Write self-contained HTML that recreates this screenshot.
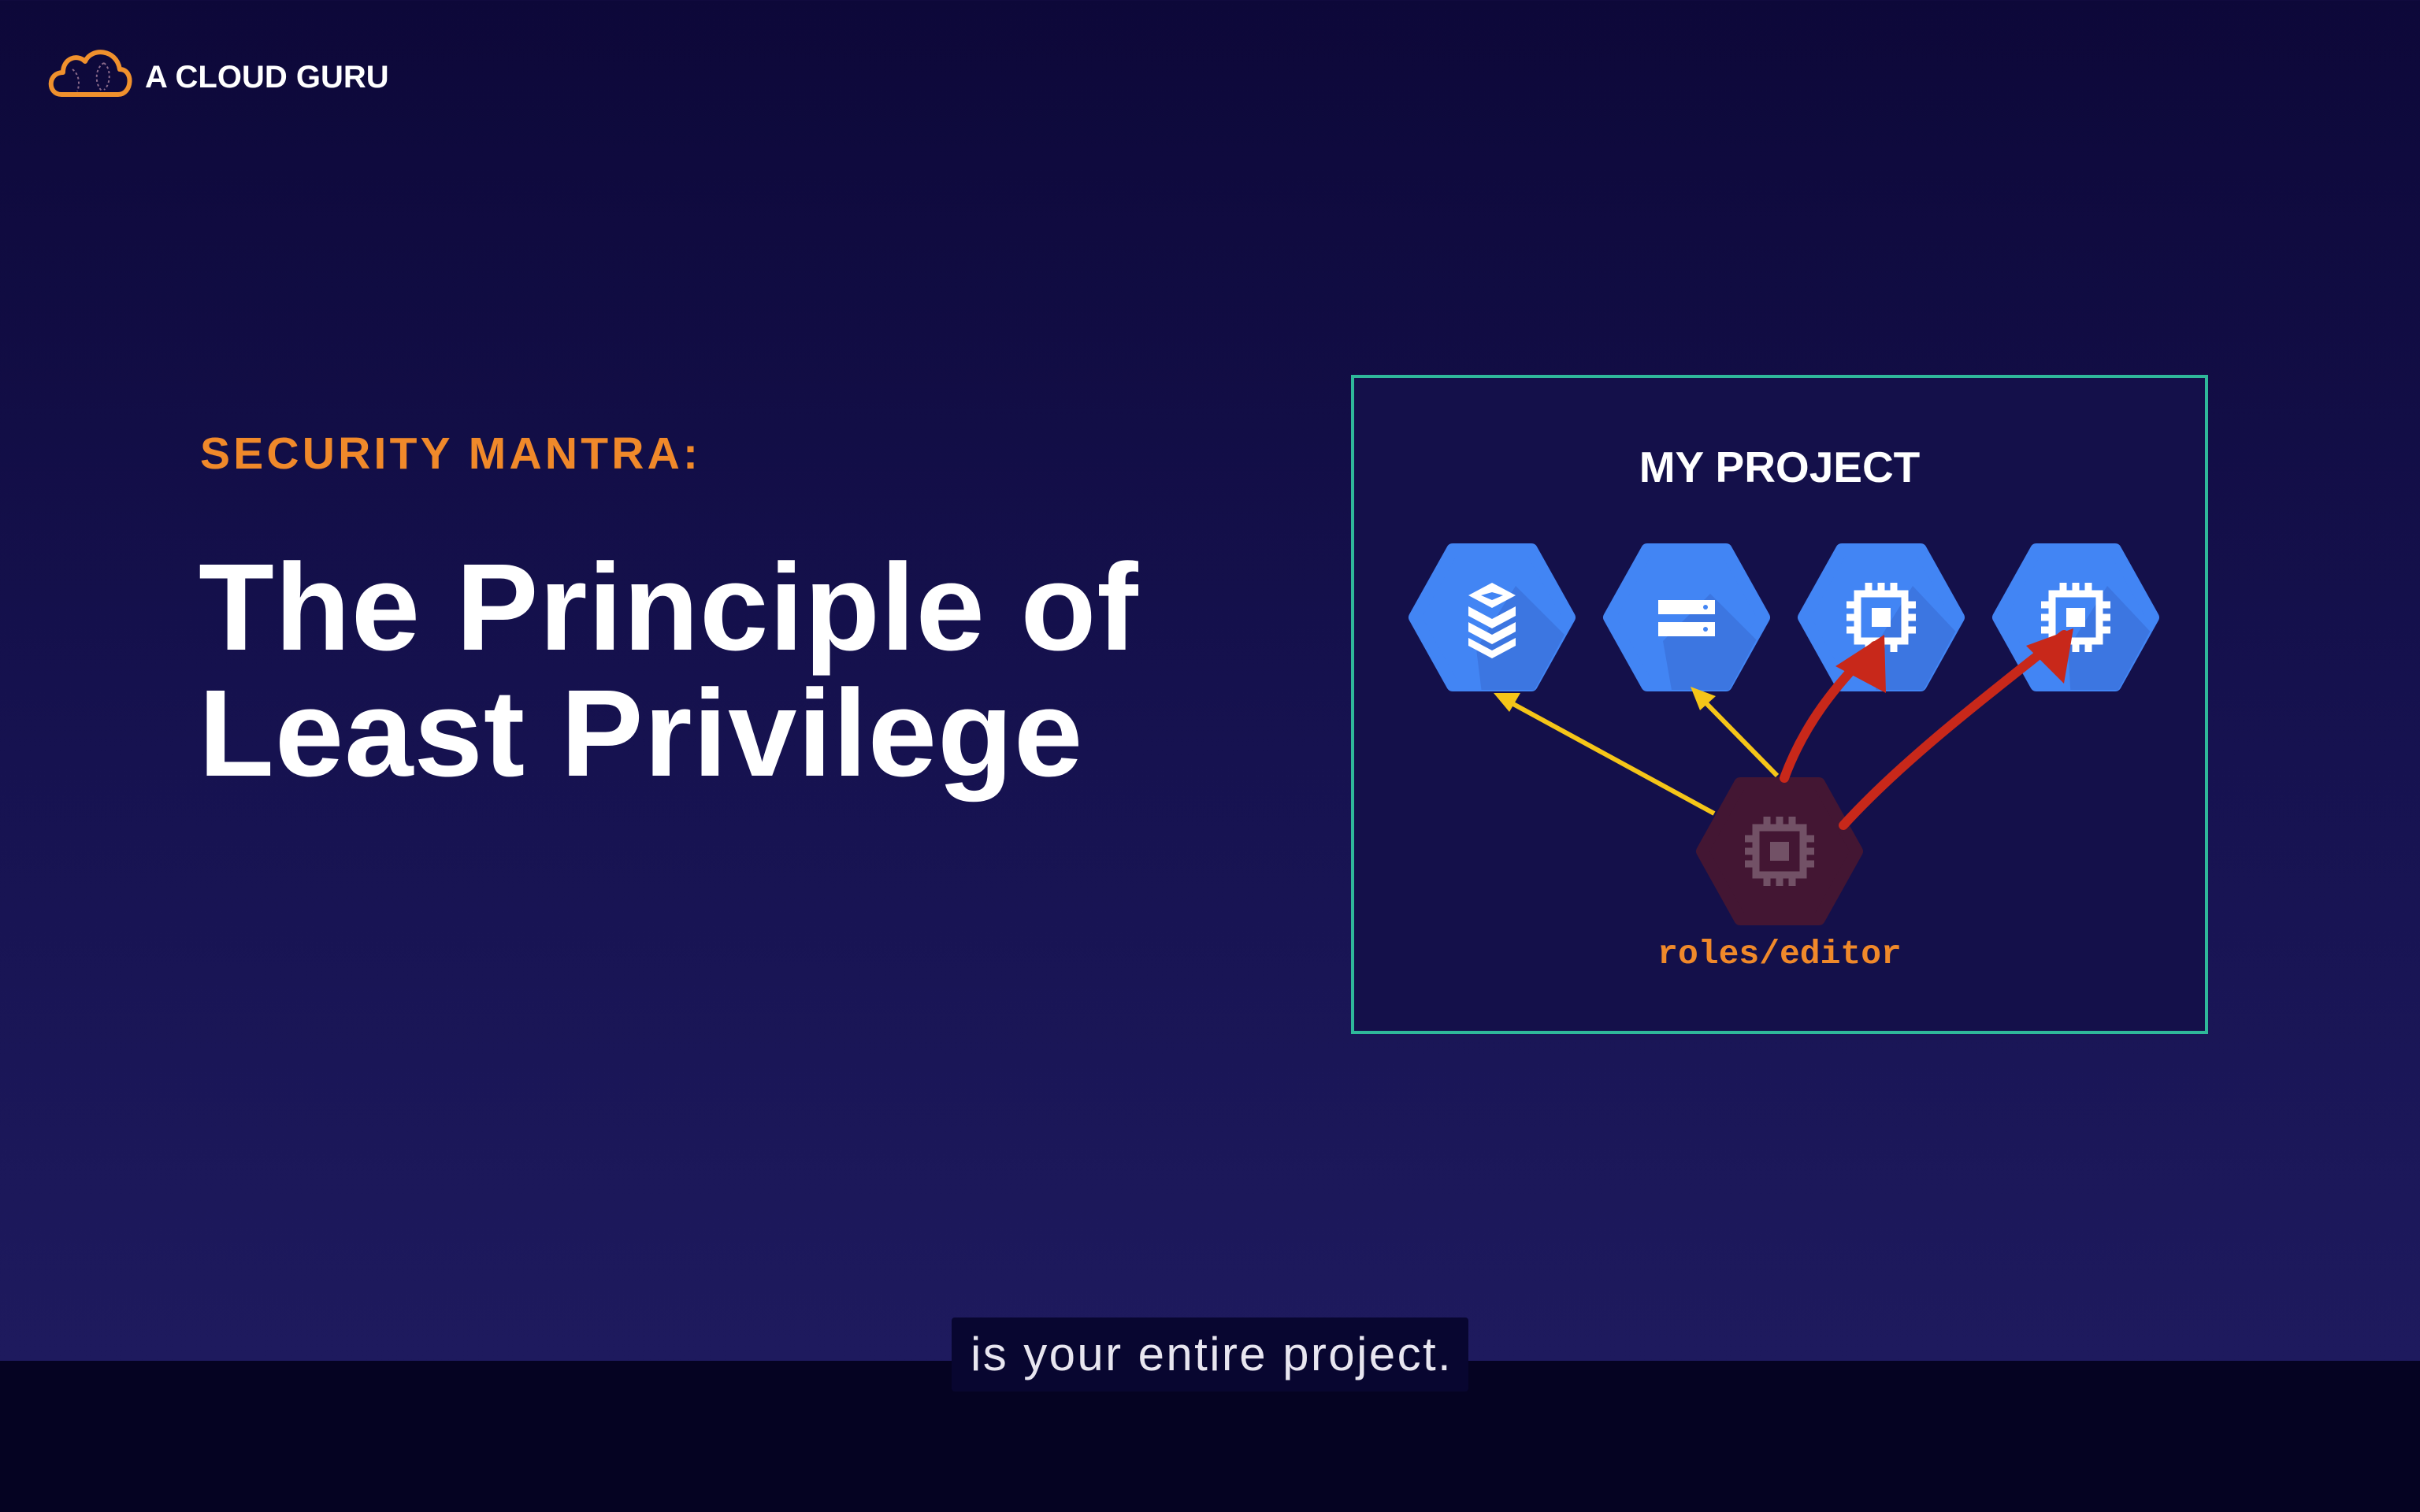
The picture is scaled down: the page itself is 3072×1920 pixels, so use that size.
<!DOCTYPE html>
<html><head><meta charset="utf-8"><style>
html,body{margin:0;padding:0}
body{width:3072px;height:1920px;overflow:hidden;position:relative;background:linear-gradient(180deg,#0d0839 0%,#161250 50%,#1e1a5e 90%);font-family:"Liberation Sans",sans-serif}
.t{position:absolute;white-space:nowrap;line-height:1}
</style></head><body>
<svg style="position:absolute;left:0;top:0" width="3072" height="1920" viewBox="0 0 3072 1920">
<defs>
<g id="hex"><polygon points="-98,0 -50,-86 50,-86 98,0 50,86 -50,86" stroke-linejoin="round" stroke-width="16"/></g>
<clipPath id="hc"><polygon points="-104,0 -54,-92 54,-92 104,0 54,92 -54,92"/></clipPath>
<g id="chip" fill="none" stroke="#fff" stroke-width="9">
<rect x="-30" y="-30" width="60" height="60"/>
<rect x="-12" y="-12" width="24" height="24" fill="#fff" stroke="none"/>
<path d="M-16,-30v-14M0,-30v-14M16,-30v-14M-16,30v14M0,30v14M16,30v14M-30,-16h-14M-30,0h-14M-30,16h-14M30,-16h14M30,0h14M30,16h14"/>
</g>
</defs>
<!-- logo -->
<path d="M78,120 C60,120 60,92 80,92 C80,74 98,68 108,78 C116,60 148,62 152,88 C170,88 168,120 150,120 Z" fill="none" stroke="#f0912d" stroke-width="6" stroke-linejoin="round"/>
<path d="M92,88 c8,6 10,18 6,28 M132,80 c-12,6 -12,28 -2,36 M132,80 c10,8 8,28 0,34" fill="none" stroke="#8a6a8a" stroke-width="2" stroke-dasharray="3 3"/>
<!-- box -->
<rect x="1717" y="478" width="1084" height="833" fill="#14104a" stroke="#2fb89a" stroke-width="4"/>
<!-- hexes -->
<g transform="translate(1894,784)"><use href="#hex" fill="#4285f4" stroke="#4285f4"/><g clip-path="url(#hc)"><polygon points="30,-40 200,130 0,200 -20,40" fill="#3b6fd8" opacity="0.7"/></g>
<g fill="#fff"><polygon points="0,-44 30,-28 0,-12 -30,-28" /><polygon points="0,-32 14,-28 0,-22 -14,-28" fill="#4285f4"/><polygon points="-30,-14 0,2 30,-14 30,-2 0,14 -30,-2"/><polygon points="-30,6 0,22 30,6 30,18 0,34 -30,18"/><polygon points="-30,26 0,42 30,26 30,36 0,52 -30,36"/></g></g>
<g transform="translate(2141,784)"><use href="#hex" fill="#4285f4" stroke="#4285f4"/><g clip-path="url(#hc)"><polygon points="30,-30 200,140 0,200 -30,30" fill="#3b6fd8" opacity="0.7"/></g>
<rect x="-36" y="-22" width="72" height="18" fill="#fff"/><rect x="-36" y="6" width="72" height="18" fill="#fff"/><circle cx="24" cy="-13" r="3" fill="#4285f4"/><circle cx="24" cy="15" r="3" fill="#4285f4"/></g>
<g transform="translate(2388,784)"><use href="#hex" fill="#4285f4" stroke="#4285f4"/><g clip-path="url(#hc)"><polygon points="40,-40 200,130 0,200 -10,40" fill="#3b6fd8" opacity="0.7"/></g><use href="#chip"/></g>
<g transform="translate(2635,784)"><use href="#hex" fill="#4285f4" stroke="#4285f4"/><g clip-path="url(#hc)"><polygon points="40,-40 200,130 0,200 -10,40" fill="#3b6fd8" opacity="0.7"/></g><use href="#chip"/></g>
<!-- dark hex -->
<g transform="translate(2259,1081)"><use href="#hex" fill="#431633" stroke="#431633"/><g opacity="0.25"><use href="#chip" style="stroke:#c0503a"/></g></g>
<!-- yellow arrows -->
<g stroke="#f5c518" stroke-width="6" fill="#f5c518">
<line x1="2176" y1="1033" x2="1910" y2="888"/><polygon points="1896,880 1930,880 1916,904" stroke="none"/>
<line x1="2256" y1="985" x2="2158" y2="885"/><polygon points="2146,872 2178,884 2158,902" stroke="none"/>
</g>
<!-- red arrows -->
<g stroke="#c8281a" stroke-width="12" fill="#c8281a" stroke-linecap="round">
<path d="M2265,988 C2290,920 2330,870 2380,820" fill="none"/><polygon points="2392,806 2394,880 2330,846" stroke="none"/>
<path d="M2340,1048 C2420,960 2540,870 2620,806" fill="none"/><polygon points="2632,798 2620,868 2572,820" stroke="none"/>
</g>
</svg>
<div class="t" style="left:184px;top:78px;font-size:40px;font-weight:bold;color:#fff">A CLOUD GURU</div>
<div class="t" style="left:254px;top:548px;font-size:57px;font-weight:bold;color:#f0892a;letter-spacing:4.2px">SECURITY MANTRA:</div>
<div class="t" style="left:252px;top:692px;font-size:157px;font-weight:bold;color:#fff;letter-spacing:1px;line-height:160px">The Principle of<br>Least Privilege</div>
<div class="t" style="left:0;width:4518px;top:566px;font-size:55px;font-weight:bold;color:#fff;text-align:center">MY PROJECT</div>
<div class="t" style="left:0;width:4518px;top:1190px;font-size:43px;font-weight:bold;color:#f0892a;text-align:center;font-family:'Liberation Mono',monospace">roles/editor</div>
<div style="position:absolute;left:0;top:1728px;width:3072px;height:192px;background:#050322"></div>
<div style="position:absolute;left:1208px;top:1673px;width:656px;height:94px;background:#080630;border-radius:4px"></div>
<div class="t" style="left:1232px;top:1690px;font-size:60px;color:#e8e6f0;letter-spacing:2.4px">is your entire project.</div>
</body></html>
